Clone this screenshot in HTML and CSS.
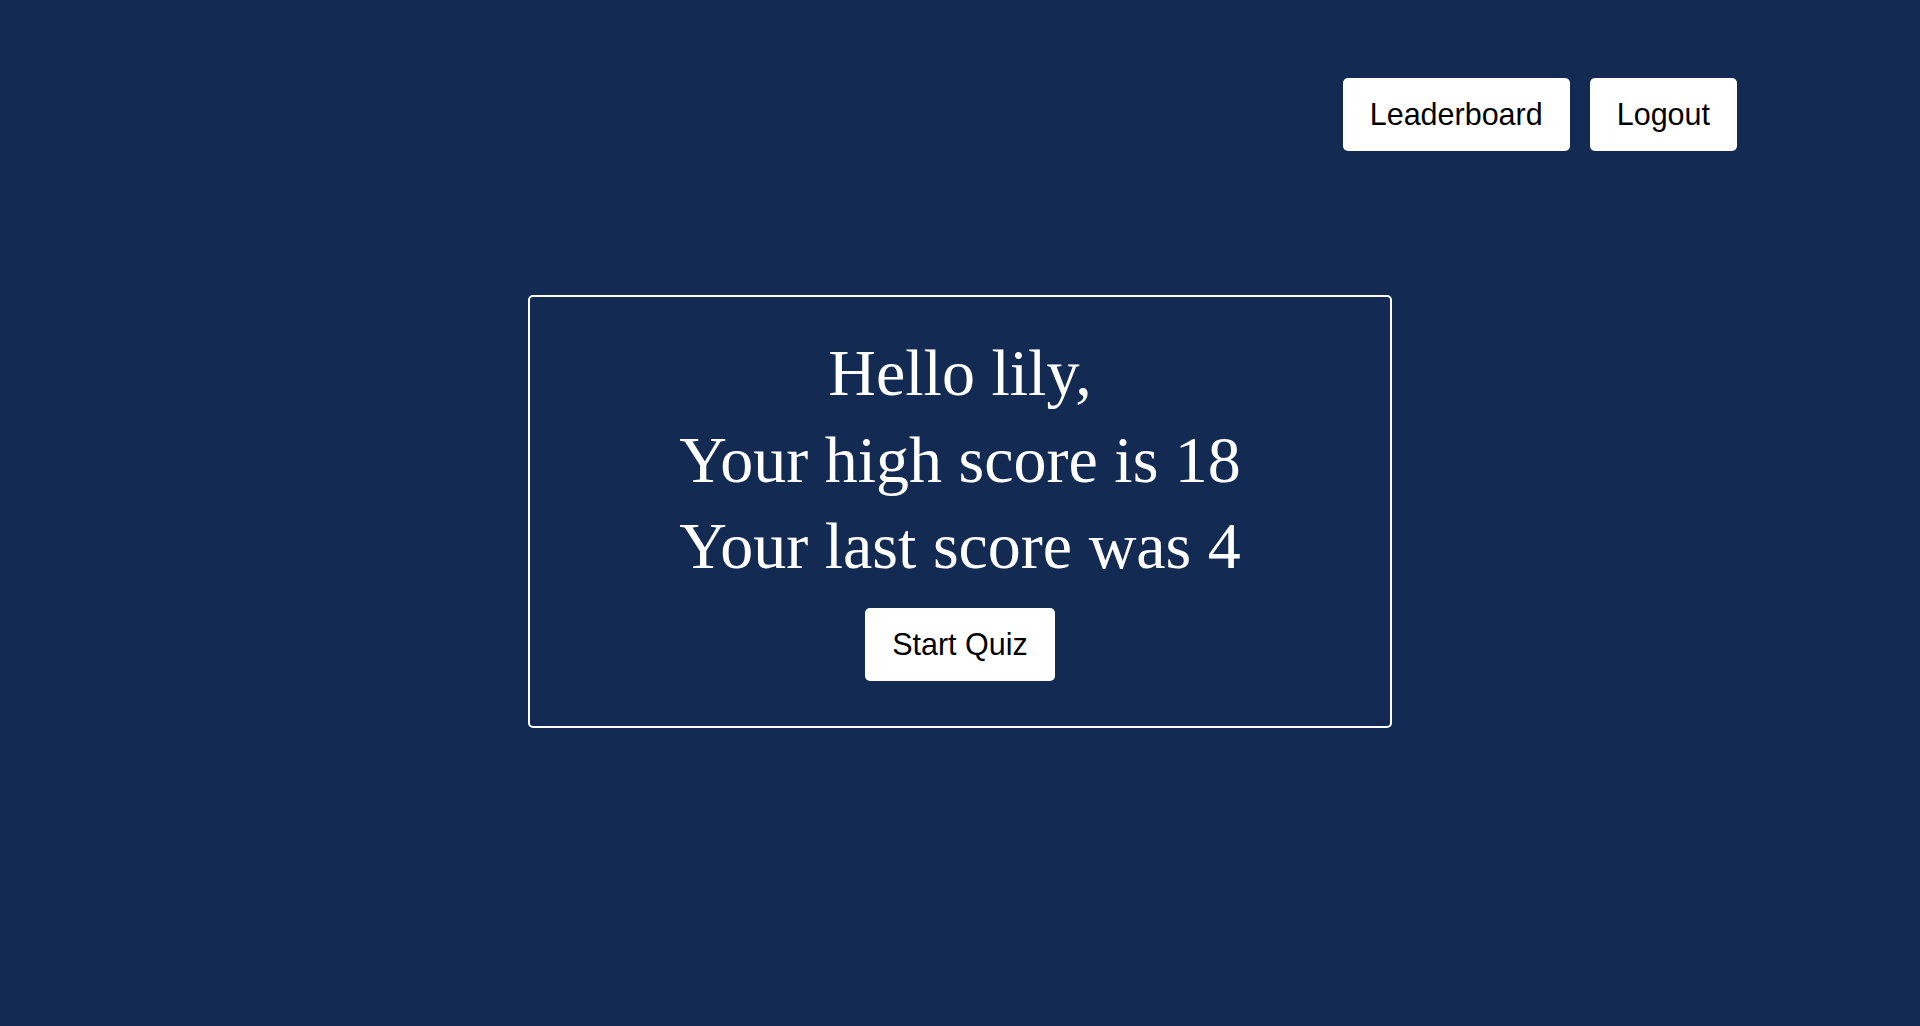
FILE: index.html
```html
<!DOCTYPE html>
<html lang="en">
<head>
<meta charset="utf-8">
<title>Quiz</title>
<link rel="stylesheet" href="styles.css">
</head>
<body>
<header class="topbar">
  <button class="btn">Leaderboard</button>
  <button class="btn">Logout</button>
</header>
<main class="main">
  <section class="card">
    <p class="line">Hello lily,</p>
    <p class="line">Your high score is 18</p>
    <p class="line">Your last score was 4</p>
    <button class="btn start">Start Quiz</button>
  </section>
</main>
</body>
</html>
```
FILE: styles.css
```css
html, body {
  margin: 0;
  padding: 0;
  height: 100%;
}
body {
  background: #132b52;
  min-height: 1026px;
  font-family: "Liberation Serif", "Times New Roman", serif;
  color: #fff;
}
.topbar {
  display: flex;
  justify-content: flex-end;
  gap: 20px;
  padding: 78px 183px 0 0;
}
.btn {
  height: 73px;
  padding: 0 27px;
  background: #fff;
  color: #000;
  border: none;
  border-radius: 5px;
  font-family: "Liberation Sans", Arial, sans-serif;
  font-size: 30.5px;
  cursor: pointer;
}
.main {
  display: flex;
  justify-content: center;
  padding-top: 144px;
}
.card {
  box-sizing: border-box;
  width: 864px;
  border: 2px solid #fff;
  border-radius: 5px;
  padding: 33px 0 45px;
  display: flex;
  flex-direction: column;
  align-items: center;
}
.line {
  margin: 0;
  font-size: 66px;
  line-height: 86.5px;
  text-align: center;
}
.start {
  margin-top: 18.5px;
}
```
